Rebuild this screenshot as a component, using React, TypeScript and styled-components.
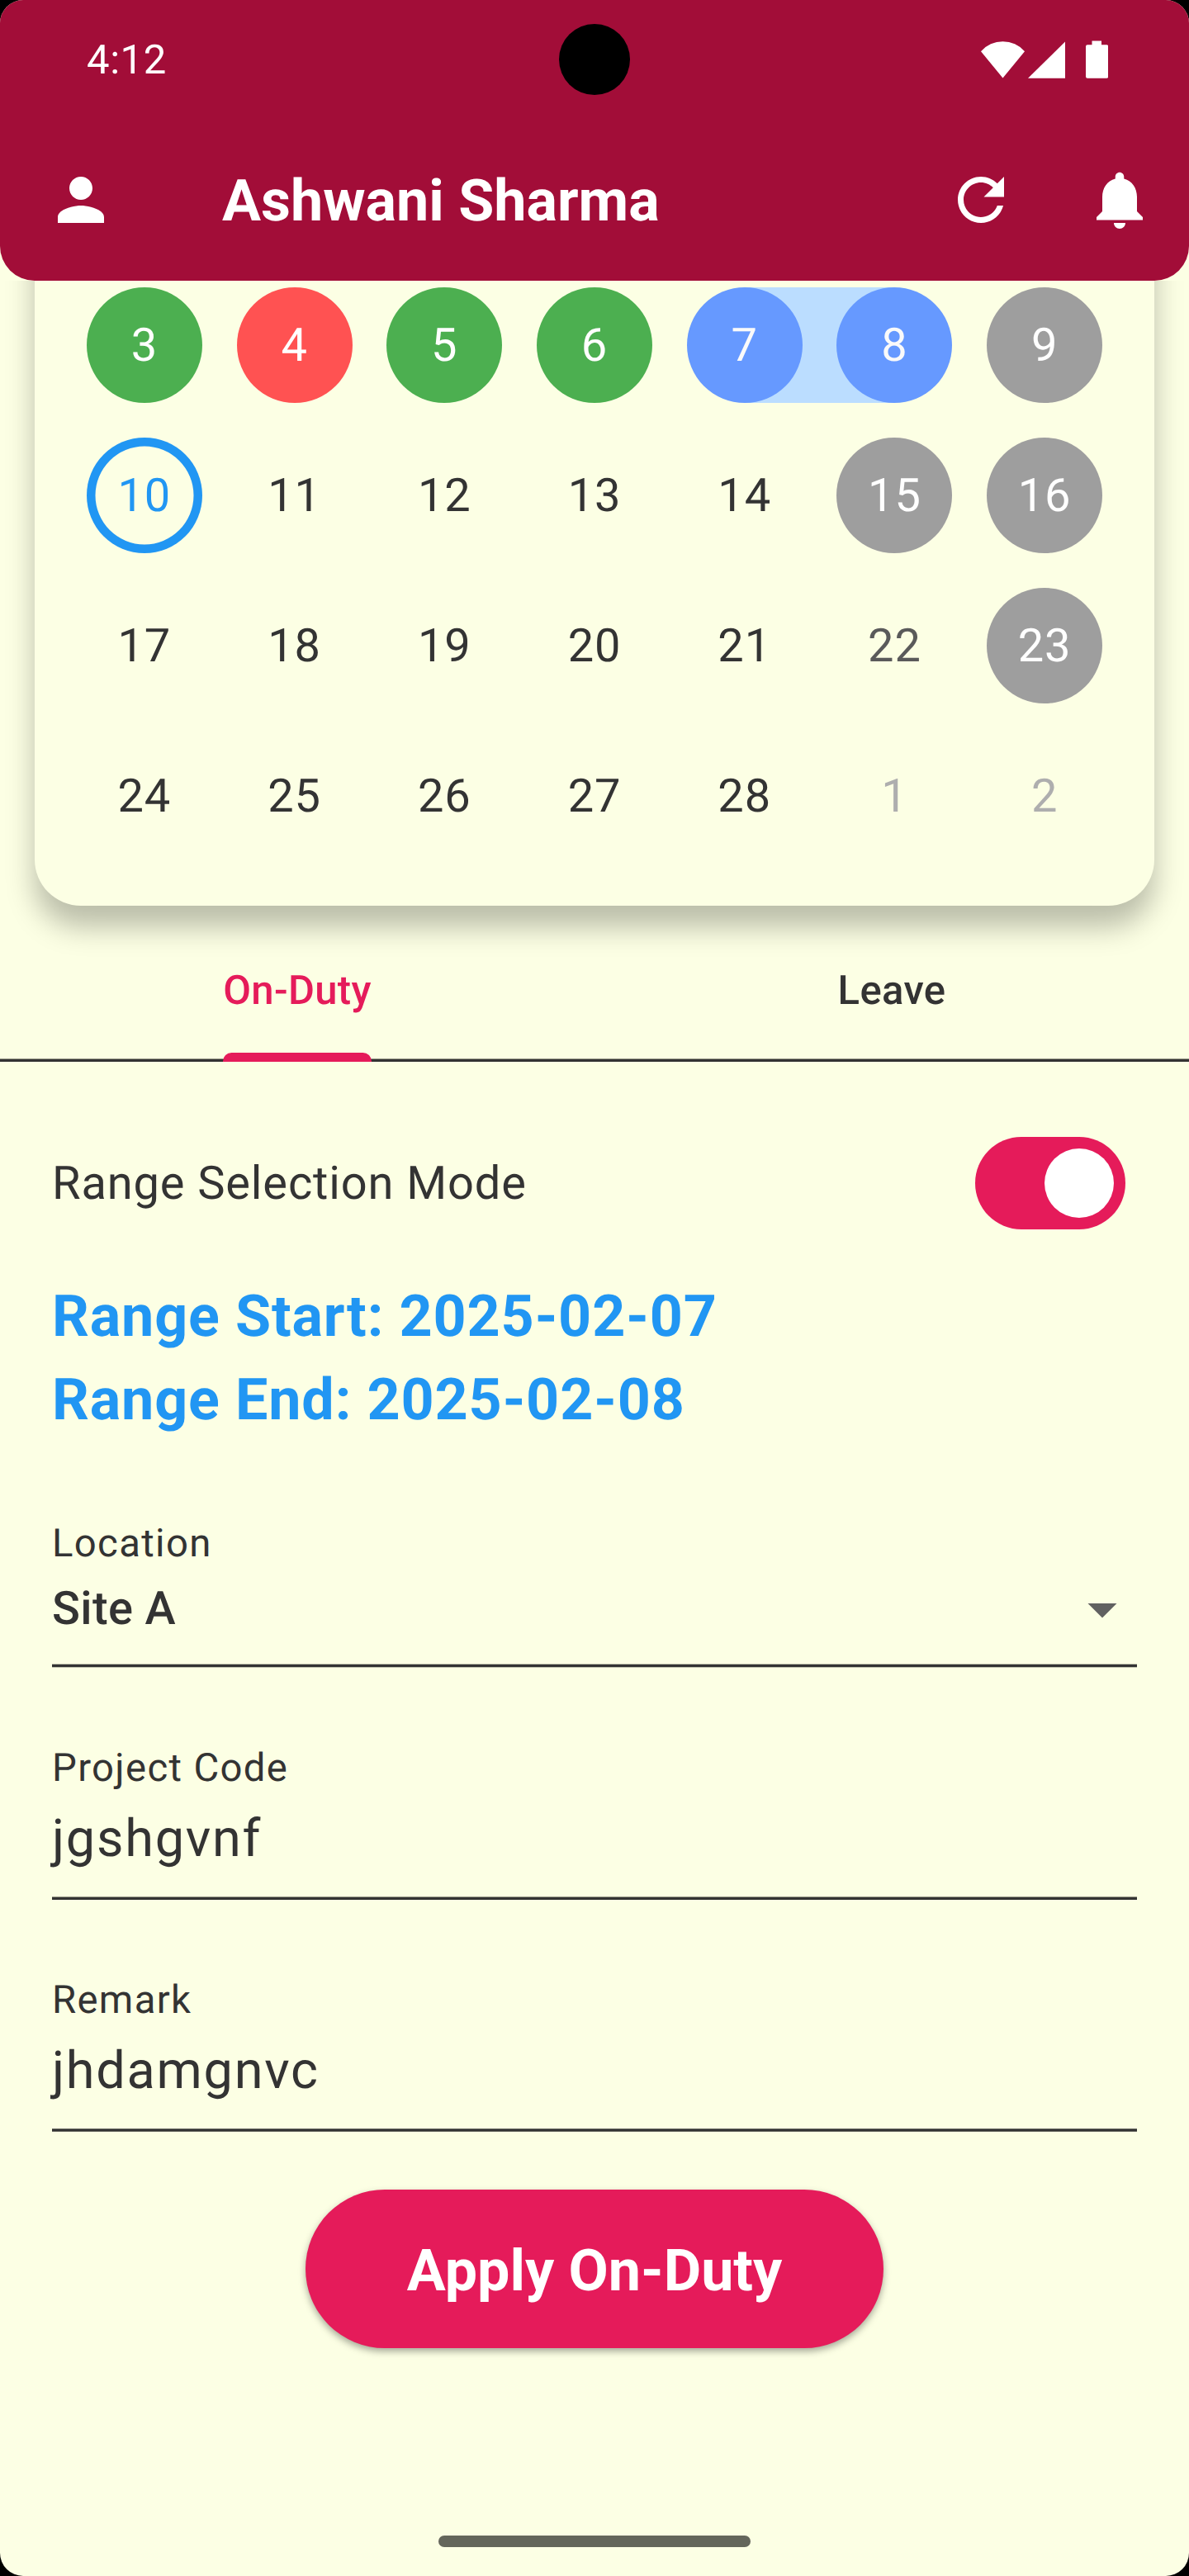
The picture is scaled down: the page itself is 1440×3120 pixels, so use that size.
import React from "react";
import styled, { createGlobalStyle } from "styled-components";

const colors = {
  page: "#fcffe4",
  header: "#a20d38",
  accent: "#e51b5a",
  ink: "#333333",
  blue: "#2196f3",
};

const GlobalStyle = createGlobalStyle`
  *, *::before, *::after { box-sizing: border-box; }
  body {
    margin: 0;
    background: #000;
    font-family: Roboto, "Noto Sans", sans-serif;
    color: ${colors.ink};
    text-rendering: geometricPrecision;
    -webkit-font-smoothing: antialiased;
  }
  button { font-family: inherit; border: 0; padding: 0; }
`;

const Screen = styled.main`
  display: flex;
  flex-direction: column;
  width: 1440px;
  height: 3120px;
  overflow: hidden;
  border-radius: 28px;
  background: ${colors.page};
`;

const Header = styled.header`
  flex: none;
  height: 340px;
  border-radius: 0 0 42px 42px;
  background: ${colors.header};
  color: #fff;
`;

const StatusBar = styled.div`
  display: grid;
  grid-template-columns: 1fr 86px 1fr;
  align-items: center;
  height: 144px;
  padding: 0 98px 0 105px;
`;

const Clock = styled.span`
  padding-top: 2px;
  font-size: 49px;
  line-height: 142px;
  letter-spacing: 0.6px;
`;

const Camera = styled.span`
  width: 86px;
  height: 86px;
  margin-left: -3.5px;
  border-radius: 50%;
  background: #000;
`;

const StatusIcons = styled.div`
  justify-self: end;
  width: 154px;
  height: 46px;
  svg { display: block; }
`;

const AppBar = styled.div`
  display: flex;
  align-items: center;
  height: 196px;
  padding: 0 42px 0 56px;
`;

const Title = styled.h1`
  flex: 1;
  margin: 0 0 0 129px;
  padding-top: 4px;
  font-size: 70px;
  line-height: 82px;
  font-weight: 700;
`;

const IconButton = styled.button<{ $gap?: number }>`
  width: 84px;
  height: 84px;
  margin-left: ${(p) => p.$gap ?? 0}px;
  background: none;
  color: inherit;
  svg { display: block; width: 84px; height: 84px; fill: currentColor; }
`;

const Body = styled.div`
  flex: 1;
  min-height: 0;
  overflow: hidden;
`;

const CalendarCard = styled.section`
  margin: -100px 42px 0;
  padding: 87px 42px 42px;
  border-radius: 56px;
  background: ${colors.page};
  box-shadow: 0 26px 34px rgba(0, 0, 0, 0.26);
`;

const Days = styled.div`
  display: grid;
  grid-template-columns: repeat(7, 1fr);
  grid-auto-rows: 182px;
`;

type Kind = "plain" | "weekend" | "outside" | "present" | "absent" | "range" | "holiday" | "today";

const fills: Record<Kind, string> = {
  plain: "transparent",
  weekend: "transparent",
  outside: "transparent",
  present: "#4caf50",
  absent: "#ff5252",
  range: "#6699ff",
  holiday: "#9e9e9e",
  today: "transparent",
};

const inks: Record<Kind, string> = {
  plain: colors.ink,
  weekend: "#5a5a5a",
  outside: "#aeaeae",
  present: "#fff",
  absent: "#fff",
  range: "#fafafa",
  holiday: "#fff",
  today: colors.blue,
};

const DayCell = styled.div<{ $band?: "left" | "right" }>`
  display: flex;
  align-items: center;
  justify-content: center;
  background: ${(p) =>
    p.$band
      ? `linear-gradient(#bbddff, #bbddff) ${p.$band} center / 50% 140px no-repeat`
      : "none"};
`;

const DayMark = styled.span<{ $kind: Kind }>`
  display: flex;
  align-items: center;
  justify-content: center;
  width: 140px;
  height: 140px;
  border-radius: 50%;
  box-shadow: ${(p) => (p.$kind === "today" ? `inset 0 0 0 10.5px ${colors.blue}` : "none")};
  background: ${(p) => fills[p.$kind]};
  color: ${(p) => inks[p.$kind]};
  font-size: 56px;
  line-height: 66px;
  letter-spacing: 0.875px;
`;

const TabBar = styled.nav`
  display: grid;
  grid-template-columns: 1fr 1fr;
  height: 168px;
  margin-top: 21px;
  background: linear-gradient(#989987 1px, ${colors.ink} 1px) bottom / 100% 4px no-repeat;
`;

const Tab = styled.div<{ $active?: boolean }>`
  display: flex;
  flex-direction: column;
  justify-self: center;
  padding-top: 6px;
  font-size: 49px;
  line-height: 151px;
  font-weight: 500;
  letter-spacing: 0.35px;
  color: ${(p) => (p.$active ? colors.accent : colors.ink)};
  &::after {
    content: "";
    height: 11px;
    border-radius: 10.5px 10.5px 0 0;
    background: ${(p) => (p.$active ? colors.accent : "transparent")};
  }
`;

const Form = styled.form`
  display: flex;
  flex-direction: column;
  padding: 91px 63px 0;
`;

const ToggleRow = styled.div`
  display: flex;
  align-items: center;
  justify-content: space-between;
  height: 112px;
  padding-right: 14px;
  font-size: 56px;
  letter-spacing: 0.875px;
`;

const Toggle = styled.span`
  display: flex;
  justify-content: flex-end;
  width: 182px;
  height: 112px;
  padding: 14px;
  border-radius: 56px;
  background: ${colors.accent};
  &::after {
    content: "";
    width: 84px;
    height: 84px;
    border-radius: 50%;
    background: #fff;
  }
`;

const RangeSummary = styled.div`
  display: flex;
  flex-direction: column;
  margin: 56px 0 1px;
  font-size: 70px;
  line-height: 101px;
  font-weight: 700;
  letter-spacing: 0.875px;
  color: ${colors.blue};
`;

const Field = styled.div`
  display: flex;
  flex-direction: column;
  padding-top: 91px;
`;

const Label = styled.label`
  font-size: 47.25px;
  line-height: 60px;
  letter-spacing: 1.35px;
`;

const SelectValue = styled.div`
  display: flex;
  align-items: center;
  justify-content: space-between;
  height: 84px;
  margin: 7px 0 25px;
  font-size: 56px;
  font-weight: 500;
  letter-spacing: 0.35px;
  svg { width: 84px; height: 84px; margin-top: 2px; fill: #616161; }
`;

const TextValue = styled.div<{ $top: number }>`
  margin: ${(p) => p.$top}px 0 ${(p) => 36 - p.$top}px;
  font-size: 63px;
  line-height: 90px;
  letter-spacing: 1.75px;
`;

const Rule = styled.span<{ $edge: string; $solid: number; $tail?: boolean }>`
  height: ${(p) => p.$solid + (p.$tail ? 2 : 1)}px;
  background: ${colors.ink};
  border-top: 1px solid ${(p) => p.$edge};
  border-bottom: ${(p) => (p.$tail ? `1px solid ${p.$edge}` : "0")};
`;

const ApplyButton = styled.button`
  align-self: center;
  width: 700px;
  height: 192px;
  margin-top: 70px;
  padding-top: 4px;
  border-radius: 96px;
  background: ${colors.accent};
  box-shadow: 0 4px 8px rgba(0, 0, 0, 0.34);
  color: #fff;
  font-size: 70px;
  line-height: 82px;
  font-weight: 700;
`;

const HomeArea = styled.footer`
  flex: none;
  display: flex;
  justify-content: center;
  height: 49px;
`;

const HomeBar = styled.span`
  width: 378px;
  height: 14px;
  border-radius: 7px;
  background: #64665b;
`;

type Day = { n: number; kind: Kind; band?: "left" | "right" };

const special: Record<number, Kind> = {
  3: "present", 4: "absent", 5: "present", 6: "present", 7: "range", 8: "range",
  9: "holiday", 10: "today", 15: "holiday", 16: "holiday", 22: "weekend", 23: "holiday",
};

const days: Day[] = [
  ...Array.from({ length: 26 }, (_, i): Day => {
    const n = i + 3;
    return { n, kind: special[n] ?? "plain", band: n === 7 ? "right" : n === 8 ? "left" : undefined };
  }),
  { n: 1, kind: "outside" },
  { n: 2, kind: "outside" },
];

export default function App() {
  return (
    <>
      <GlobalStyle />
      <Screen>
        <Header>
          <StatusBar>
            <Clock>4:12</Clock>
            <Camera />
            <StatusIcons>
              <svg width="154" height="46" viewBox="0 0 154 46" fill="#fff">
                <path d="M0 13.2A35.3 35.3 0 0 1 53 13.2L26.5 45.5Z" />
                <path d="M57 45.7L102 1.5V45.7Z" />
                <path d="M134.5 0.5h11.5v4.7h6.200a2 2 0 0 1 2 2V43.700a2 2 0 0 1-2 2h-23.200a2 2 0 0 1-2-2V7.200a2 2 0 0 1 2-2h5.500z" />
              </svg>
            </StatusIcons>
          </StatusBar>
          <AppBar>
            <IconButton aria-label="Profile">
              <svg viewBox="0 0 24 24">
                <path d="M12 12c2.210 0 4-1.790 4-4s-1.790-4-4-4-4 1.790-4 4 1.790 4 4 4zm0 2c-2.670 0-8 1.340-8 4v2h16v-2c0-2.660-5.330-4-8-4z" />
              </svg>
            </IconButton>
            <Title>Ashwani Sharma</Title>
            <IconButton aria-label="Refresh">
              <svg viewBox="0 0 24 24">
                <path d="M17.650 6.350C16.200 4.900 14.210 4 12 4c-4.420 0-7.990 3.580-7.990 8s3.570 8 7.990 8c3.730 0 6.840-2.550 7.730-6h-2.080c-.82 2.330-3.040 4-5.650 4-3.310 0-6-2.690-6-6s2.690-6 6-6c1.660 0 3.140.69 4.220 1.780L13 11h7V4l-2.350 2.350z" />
              </svg>
            </IconButton>
            <IconButton aria-label="Notifications" $gap={84}>
              <svg viewBox="0 0 24 24">
                <path d="M12 22c1.100 0 2-.9 2-2h-4c0 1.100.89 2 2 2zm6-6v-5c0-3.070-1.640-5.640-4.500-6.320V4c0-.83-.67-1.500-1.500-1.500s-1.500.67-1.500 1.500v.68C7.630 5.360 6 7.920 6 11v5l-2 2v1h16v-1l-2-2z" />
              </svg>
            </IconButton>
          </AppBar>
        </Header>

        <Body>
          <CalendarCard>
            <Days>
              {days.map((d, i) => (
                <DayCell key={i} $band={d.band}>
                  <DayMark $kind={d.kind}>{d.n}</DayMark>
                </DayCell>
              ))}
            </Days>
          </CalendarCard>

          <TabBar>
            <Tab $active>On-Duty</Tab>
            <Tab>Leave</Tab>
          </TabBar>

          <Form>
            <ToggleRow>
              Range Selection Mode
              <Toggle role="switch" aria-checked="true" />
            </ToggleRow>
            <RangeSummary>
              <span>Range Start: 2025-02-07</span>
              <span>Range End: 2025-02-08</span>
            </RangeSummary>
            <Field>
              <Label>Location</Label>
              <SelectValue>
                Site A
                <svg viewBox="0 0 24 24">
                  <path d="M7 10l5 5 5-5z" />
                </svg>
              </SelectValue>
              <Rule $edge="#c0c2ae" $solid={3} $tail />
            </Field>
            <Field>
              <Label>Project Code</Label>
              <TextValue $top={12}>jgshgvnf</TextValue>
              <Rule $edge="#989987" $solid={3} />
            </Field>
            <Field>
              <Label>Remark</Label>
              <TextValue $top={12}>jhdamgnvc</TextValue>
              <Rule $edge="#65665f" $solid={2} $tail />
            </Field>
            <ApplyButton type="button">Apply On-Duty</ApplyButton>
          </Form>
        </Body>

        <HomeArea>
          <HomeBar />
        </HomeArea>
      </Screen>
    </>
  );
}
